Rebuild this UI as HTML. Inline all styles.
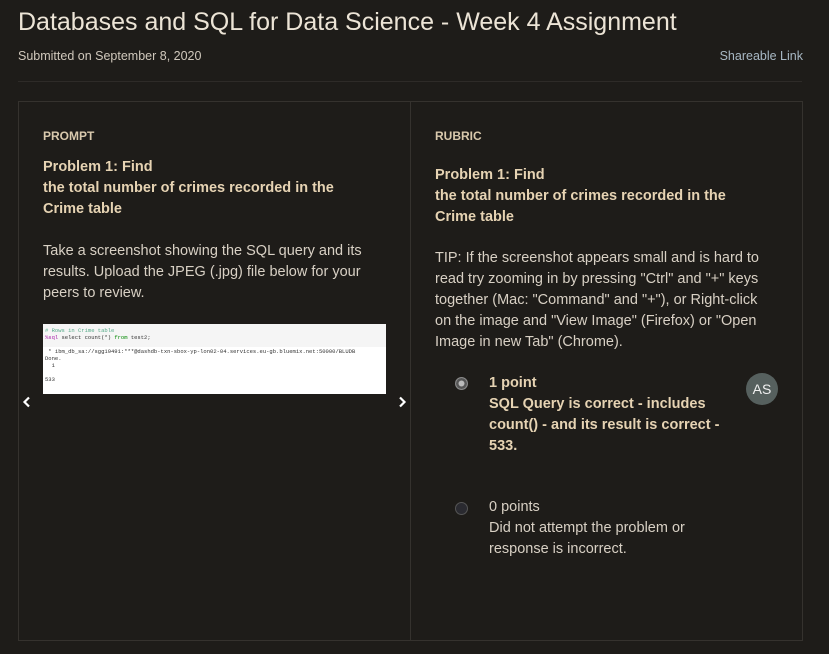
<!DOCTYPE html><html><head><style>
body{margin:0;width:829px;height:654px;background:#1e1c19;font-family:"Liberation Sans",sans-serif;color:#d8d0c4;position:relative;overflow:hidden}
.a{position:absolute;white-space:nowrap}
h1{position:absolute;left:18px;top:8px;margin:0;font-weight:normal;font-size:25px;color:#ece4d6}
.card{position:absolute;left:18px;top:101px;width:783px;height:538px;border:1px solid #35322e}
.div{position:absolute;left:410px;top:101px;width:1px;height:540px;background:#35322e}
.lbl{font-size:12px;font-weight:bold;color:#d9c9ad}
.h{font-size:14.5px;font-weight:bold;color:#e6d3b3;line-height:21px}
.t{font-size:14.5px;line-height:21px;color:#d8d0c4}
</style></head><body>
<h1>Databases and SQL for Data Science - Week 4 Assignment</h1>
<div class="a" style="left:18px;top:49px;font-size:12.5px;color:#d0c8bc">Submitted on September 8, 2020</div>
<div class="a" style="right:26px;top:49px;font-size:12.5px;color:#a8b8c4">Shareable Link</div>
<div class="a" style="left:18px;top:81px;width:784px;height:1px;background:#2e2b28"></div>
<div class="card"></div><div class="div"></div>
<div class="a lbl" style="left:43px;top:129px">PROMPT</div>
<div class="a h" style="left:43px;top:157px">Problem 1: Find<br>the total number of crimes recorded in the<br>Crime table</div>
<div class="a t" style="left:43px;top:241px">Take a screenshot showing the SQL query and its<br>results. Upload the JPEG (.jpg) file below for your<br>peers to review.</div>
<div class="a" style="left:43px;top:324px;width:343px;height:70px;background:#fff;font-family:'Liberation Mono',monospace;font-size:5.5px;line-height:7px;color:#333">
<div style="background:#f5f5f5;padding:3px 2px 2px;height:18px"><span style="color:#5a8">#&nbsp;Rows in Crime table</span><br><span style="color:#a2a">%sql</span> select count(*) <span style="color:#080">from</span> test2;</div>
<div style="padding:1px 2px">&nbsp;* ibm_db_sa://sgg19491:***@dashdb-txn-sbox-yp-lon02-04.services.eu-gb.bluemix.net:50000/BLUDB<br>Done.<br>&nbsp;&nbsp;1<br><br>533</div></div>
<svg class="a" style="left:22px;top:396px" width="10" height="12"><path d="M7 1.5L2.5 6L7 10.5" stroke="#fff" stroke-width="2.2" fill="none"/></svg>
<svg class="a" style="left:397px;top:396px" width="10" height="12"><path d="M3 1.5L7.5 6L3 10.5" stroke="#fff" stroke-width="2.2" fill="none"/></svg>
<div class="a lbl" style="left:435px;top:129px">RUBRIC</div>
<div class="a h" style="left:435px;top:165px">Problem 1: Find<br>the total number of crimes recorded in the<br>Crime table</div>
<div class="a t" style="left:435px;top:248px">TIP: If the screenshot appears small and is hard to<br>read try zooming in by pressing "Ctrl" and "+" keys<br>together (Mac: "Command" and "+"), or Right-click<br>on the image and "View Image" (Firefox) or "Open<br>Image in new Tab" (Chrome).</div>
<div class="a" style="left:455px;top:377px;width:11px;height:11px;border-radius:50%;border:1.5px solid #888;background:#bbb;box-shadow:inset 0 0 0 2.5px #555"></div>
<div class="a h" style="left:489px;top:373px">1 point<br>SQL Query is correct - includes<br>count() - and its result is correct -<br>533.</div>
<div class="a" style="left:746px;top:373px;width:32px;height:32px;border-radius:50%;background:#56605e;color:#f0f0f0;font-size:14px;text-align:center;line-height:32px">AS</div>
<div class="a" style="left:455px;top:502px;width:11px;height:11px;border-radius:50%;border:1.5px solid #555;background:#2a2a30"></div>
<div class="a t" style="left:489px;top:497px">0 points<br>Did not attempt the problem or<br>response is incorrect.</div>
</body></html>
